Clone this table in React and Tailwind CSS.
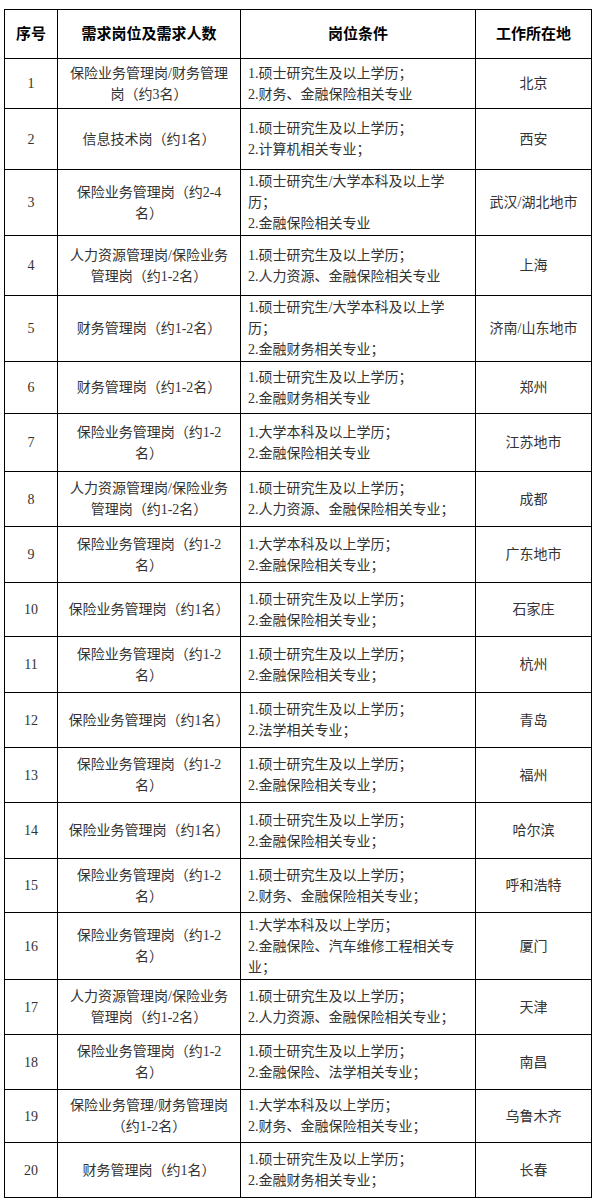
import React from "react";

const rows = [
  { n: "1", h: "h-[50px]", job: ["保险业务管理岗/财务管理", "岗（约3名）"], cond: ["1.硕士研究生及以上学历；", "2.财务、金融保险相关专业"], loc: "北京" },
  { n: "2", h: "h-[61px]", job: ["信息技术岗（约1名）"], cond: ["1.硕士研究生及以上学历；", "2.计算机相关专业；"], loc: "西安" },
  { n: "3", h: "h-[66px]", job: ["保险业务管理岗（约2-4", "名）"], cond: ["1.硕士研究生/大学本科及以上学", "历；", "2.金融保险相关专业"], loc: "武汉/湖北地市" },
  { n: "4", h: "h-[60px]", job: ["人力资源管理岗/保险业务", "管理岗（约1-2名）"], cond: ["1.硕士研究生及以上学历；", "2.人力资源、金融保险相关专业"], loc: "上海" },
  { n: "5", h: "h-[66px]", job: ["财务管理岗（约1-2名）"], cond: ["1.硕士研究生/大学本科及以上学", "历；", "2.金融财务相关专业；"], loc: "济南/山东地市" },
  { n: "6", h: "h-[52px]", job: ["财务管理岗（约1-2名）"], cond: ["1.硕士研究生及以上学历；", "2.金融财务相关专业"], loc: "郑州" },
  { n: "7", h: "h-[58px]", job: ["保险业务管理岗（约1-2", "名）"], cond: ["1.大学本科及以上学历；", "2.金融保险相关专业"], loc: "江苏地市" },
  { n: "8", h: "h-[55px]", job: ["人力资源管理岗/保险业务", "管理岗（约1-2名）"], cond: ["1.硕士研究生及以上学历；", "2.人力资源、金融保险相关专业；"], loc: "成都" },
  { n: "9", h: "h-[56px]", job: ["保险业务管理岗（约1-2", "名）"], cond: ["1.大学本科及以上学历；", "2.金融保险相关专业；"], loc: "广东地市" },
  { n: "10", h: "h-[54px]", job: ["保险业务管理岗（约1名）"], cond: ["1.硕士研究生及以上学历；", "2.金融保险相关专业；"], loc: "石家庄" },
  { n: "11", h: "h-[56px]", job: ["保险业务管理岗（约1-2", "名）"], cond: ["1.硕士研究生及以上学历；", "2.金融保险相关专业；"], loc: "杭州" },
  { n: "12", h: "h-[55px]", job: ["保险业务管理岗（约1名）"], cond: ["1.硕士研究生及以上学历；", "2.法学相关专业；"], loc: "青岛" },
  { n: "13", h: "h-[55px]", job: ["保险业务管理岗（约1-2", "名）"], cond: ["1.硕士研究生及以上学历；", "2.金融保险相关专业；"], loc: "福州" },
  { n: "14", h: "h-[56px]", job: ["保险业务管理岗（约1名）"], cond: ["1.硕士研究生及以上学历；", "2.金融保险相关专业；"], loc: "哈尔滨" },
  { n: "15", h: "h-[54px]", job: ["保险业务管理岗（约1-2", "名）"], cond: ["1.硕士研究生及以上学历；", "2.财务、金融保险相关专业；"], loc: "呼和浩特" },
  { n: "16", h: "h-[67px]", job: ["保险业务管理岗（约1-2", "名）"], cond: ["1.大学本科及以上学历；", "2.金融保险、汽车维修工程相关专", "业；"], loc: "厦门" },
  { n: "17", h: "h-[55px]", job: ["人力资源管理岗/保险业务", "管理岗（约1-2名）"], cond: ["1.硕士研究生及以上学历；", "2.人力资源、金融保险相关专业；"], loc: "天津" },
  { n: "18", h: "h-[55px]", job: ["保险业务管理岗（约1-2", "名）"], cond: ["1.硕士研究生及以上学历；", "2.金融保险、法学相关专业；"], loc: "南昌" },
  { n: "19", h: "h-[53px]", job: ["保险业务管理/财务管理岗", "（约1-2名）"], cond: ["1.大学本科及以上学历；", "2.财务、金融保险相关专业；"], loc: "乌鲁木齐" },
  { n: "20", h: "h-[55px]", job: ["财务管理岗（约1名）"], cond: ["1.硕士研究生及以上学历；", "2.金融财务相关专业；"], loc: "长春" },
];

const font = "font-['Liberation_Serif','Noto_Sans_CJK_SC',serif]";

export default function App() {
  return (
    <div className={`bg-white w-[595px] h-[1204px] pt-[9px] pl-[4px] ${font}`}>
      <table className="table-fixed w-[587px] border-collapse border border-black text-[14px] leading-[21px] text-[#333]">
        <colgroup>
          <col className="w-[53px]" />
          <col className="w-[183px]" />
          <col className="w-[235px]" />
          <col className="w-[116px]" />
        </colgroup>
        <thead>
          <tr className="h-[49px] text-[15px] font-bold text-black">
            <th className="border border-black text-center align-middle p-0">序号</th>
            <th className="border border-black text-center align-middle p-0">需求岗位及需求人数</th>
            <th className="border border-black text-center align-middle p-0">岗位条件</th>
            <th className="border border-black text-center align-middle p-0">工作所在地</th>
          </tr>
        </thead>
        <tbody>
          {rows.map((r) => (
            <tr key={r.n} className={r.h}>
              <td className="border border-black text-center align-middle p-0">{r.n}</td>
              <td className="border border-black text-center align-middle px-[4px] py-0">
                {r.job.map((l, i) => (
                  <div key={i} className="whitespace-nowrap">{l}</div>
                ))}
              </td>
              <td className="border border-black text-left align-middle pl-[7px] pr-0 py-0">
                {r.cond.map((l, i) => (
                  <div key={i} className="whitespace-nowrap">{l}</div>
                ))}
              </td>
              <td className="border border-black text-center align-middle p-0">{r.loc}</td>
            </tr>
          ))}
        </tbody>
      </table>
    </div>
  );
}
